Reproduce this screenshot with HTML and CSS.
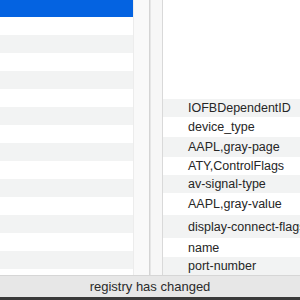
FILE: index.html
```html
<!DOCTYPE html>
<html lang="en">
<head>
    <meta charset="UTF-8">
    <title>IORegistryExplorer</title>
    <link rel="stylesheet" href="styles.css">
</head>
<body>
    <div class="window">
        <div class="panes">
            <div class="tree">
                <div class="row selected"></div>
                <div class="row"></div>
                <div class="row alt"></div>
                <div class="row"></div>
                <div class="row alt"></div>
                <div class="row"></div>
                <div class="row alt"></div>
                <div class="row"></div>
                <div class="row alt"></div>
                <div class="row"></div>
                <div class="row alt"></div>
                <div class="row"></div>
                <div class="row alt"></div>
                <div class="row"></div>
                <div class="row alt"></div>
                <div class="row"></div>
            </div>
            <div class="scroll"></div>
            <div class="split"></div>
            <div class="gutter"></div>
            <div class="props">
                <div class="props-top"></div>
                <div class="prop alt h18">IOFBDependentID</div>
                <div class="prop h20">device_type</div>
                <div class="prop alt h20">AAPL,gray-page</div>
                <div class="prop h18">ATY,ControlFlags</div>
                <div class="prop alt h18">av-signal-type</div>
                <div class="prop h22">AAPL,gray-value</div>
                <div class="prop alt h23">display-connect-flags</div>
                <div class="prop h19">name</div>
                <div class="prop alt h18">port-number</div>
            </div>
        </div>
        <div class="status">registry has changed</div>
        <div class="edge"></div>
    </div>
</body>
</html>
```

FILE: styles.css
```css
body {
    margin: 0;
    width: 300px;
    height: 300px;
    overflow: hidden;
    font-family: 'Liberation Sans', Arial, sans-serif;
    background: #ffffff;
}

.window {
    display: flex;
    flex-direction: column;
    height: 300px;
}

.panes {
    display: flex;
    height: 275px;
    overflow: hidden;
}

.tree {
    width: 133px;
    flex-shrink: 0;
}

.row {
    height: 18px;
    background: #ffffff;
}

.row.alt {
    background: #f2f3f3;
}

.row.selected {
    height: 17px;
    background: #0463e1;
}

.scroll {
    width: 15px;
    background: #f9f9f9;
    border-left: 1px solid #ececec;
}

.split {
    width: 1px;
    background: #d4d4d4;
}

.gutter {
    width: 11px;
    background: #f7f7f7;
    border-left: 1px solid #e6e6e6;
    border-right: 1px solid #d9d9d9;
}

.props {
    flex: 1;
    overflow: hidden;
}

.props-top {
    height: 99px;
}

.prop {
    padding-left: 25px;
    font-size: 12.5px;
    color: #262626;
    white-space: nowrap;
    display: flex;
    align-items: center;
}

.prop.alt {
    background: #f2f3f3;
}

.h18 { height: 18px; }
.h19 { height: 19px; }
.h20 { height: 20px; }
.h22 { height: 22px; }
.h23 { height: 23px; }

.status {
    height: 22px;
    background: #e7e7e7;
    border-top: 1px solid #d6d6d6;
    box-sizing: border-box;
    display: flex;
    align-items: center;
    justify-content: center;
    font-size: 13px;
    color: #2b2b2b;
}

.edge {
    height: 3px;
    background: #3a3a3a;
}
```
